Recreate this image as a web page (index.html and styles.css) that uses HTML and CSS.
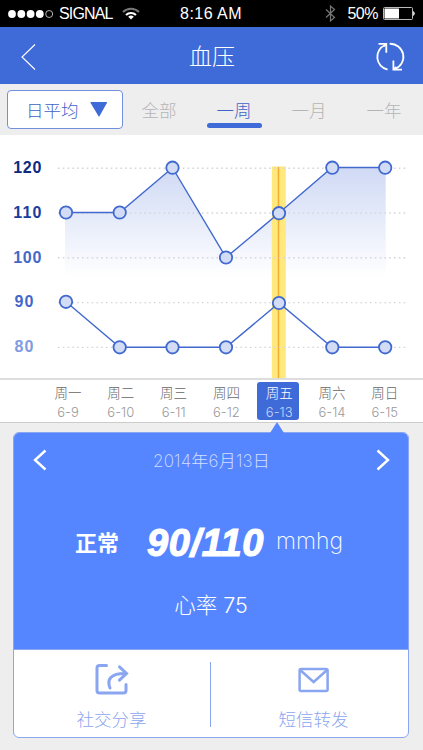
FILE: index.html
```html
<!DOCTYPE html>
<html lang="zh-CN">
<head>
    <meta charset="UTF-8">
    <meta name="viewport" content="width=device-width, initial-scale=1.0">
    <title>血压</title>
    <link rel="stylesheet" href="styles.css">
</head>
<body>
    <div class="status-bar">
        <div class="signal">
            <svg width="46" height="10" viewBox="0 0 46 10">
                <g fill="#fff">
                    <circle cx="4" cy="5" r="3.9"/>
                    <circle cx="13.3" cy="5" r="3.9"/>
                    <circle cx="22.6" cy="5" r="3.9"/>
                    <circle cx="31.8" cy="5" r="3.9"/>
                </g>
                <circle cx="41.2" cy="5" r="3.5" fill="none" stroke="#ddd" stroke-width="0.8"/>
            </svg>
            <span class="carrier">SIGNAL</span>
            <svg width="18" height="13" viewBox="0 0 18 13" fill="none" stroke="#fff" stroke-width="2">
                <path d="M1 5a11.3 11.3 0 0 1 16 0" stroke="#777"/>
                <path d="M4 8a7.1 7.1 0 0 1 10 0"/>
                <path d="M9 12.5L6.2 9.8a4 4 0 0 1 5.6 0z" fill="#fff" stroke="none"/>
            </svg>
        </div>
        <div class="clock">8:16 AM</div>
        <div class="power">
            <svg width="11" height="17" viewBox="0 0 11 17" fill="none" stroke="#777" stroke-width="1.2">
                <path d="M1 4.5l8.5 8-4 3.5V1l4 3.5-8.5 8"/>
            </svg>
            <span class="percent">50%</span>
            <svg width="33" height="13" viewBox="0 0 33 13">
                <rect x="0.5" y="0.5" width="29" height="12" rx="1" fill="none" stroke="#bbb"/>
                <rect x="1.5" y="1.5" width="14.5" height="10" fill="#fff"/>
                <path d="M30.5 4.5q2 2 0 4z" fill="#fff" stroke="#fff" stroke-width="0.6"/>
            </svg>
        </div>
    </div>

    <div class="header">
        <svg class="back" width="15" height="28" viewBox="0 0 15 28" fill="none" stroke="#fff" stroke-width="1.1">
            <path d="M14 1.5L1 14l13 12.5"/>
        </svg>
        <h1>血压</h1>
        <svg class="refresh" width="30" height="30" viewBox="0 0 30 30" fill="none" stroke="#fff" stroke-width="1.8">
            <path d="M12.6 27.6A13 13 0 0 1 10 3"/>
            <path d="M3.5 1.9h7.8v8.8M11.3 2L8.5 4.4"/>
            <path d="M14.6 1.8A13 13 0 0 1 19.8 27"/>
            <path d="M27 27.6h-8.6v-9M18.4 27.6l3-2.6"/>
        </svg>
    </div>

    <div class="tabs">
        <div class="select">日平均
            <svg width="18" height="15" viewBox="0 0 18 15" fill="#3f6bd9">
                <path d="M1 0h15.5q1 0 .4 1L9.6 14q-.6 1-1.2 0L.6 1Q0 0 1 0z"/>
            </svg>
        </div>
        <div class="tab">全部</div>
        <div class="tab active">一周</div>
        <div class="tab">一月</div>
        <div class="tab">一年</div>
    </div>

    <div class="chart">
        <svg width="423" height="243" viewBox="0 0 423 243">
            <defs>
                <linearGradient id="fade" gradientUnits="userSpaceOnUse" x1="0" y1="32" x2="0" y2="142">
                    <stop offset="0" stop-color="#4169d5" stop-opacity="0.25"/>
                    <stop offset="1" stop-color="#4169d5" stop-opacity="0"/>
                </linearGradient>
            </defs>
            <path d="M65 77.5H119.7L172.5 32.7L226 122.5L279 78L332 32.5H385.7V142H65z" fill="url(#fade)"/>
            <rect x="271.8" y="31.5" width="14" height="211.5" fill="#ffe87c"/>
            <path d="M278.5 32v211" stroke="#f2ab35" stroke-width="1.5"/>
            <g class="grid">
                <path d="M58 33.2H408M58 78H408M58 122.8H408M58 167.6H408M58 212.4H408"/>
            </g>
            <g class="lines">
                <path d="M66 77.5H119.7L172.5 32.7L226 122.5L279 78L332 32.5H385"/>
                <path d="M66 166.8L119.7 212.3H226L279 168L332 212.3H385"/>
            </g>
            <g class="dots">
                <circle cx="66" cy="77.5" r="6.2"/>
                <circle cx="119.7" cy="77.5" r="6.2"/>
                <circle cx="172.5" cy="32.7" r="6.2"/>
                <circle cx="226" cy="122.5" r="6.2"/>
                <circle cx="279" cy="78.2" r="6.2"/>
                <circle cx="332.3" cy="32.7" r="6.2"/>
                <circle cx="385.2" cy="32.7" r="6.2"/>
                <circle cx="66" cy="166.8" r="6.2"/>
                <circle cx="119.7" cy="212.3" r="6.2"/>
                <circle cx="172.5" cy="212.3" r="6.2"/>
                <circle cx="226" cy="212.3" r="6.2"/>
                <circle cx="279" cy="168" r="6.2"/>
                <circle cx="332.3" cy="212.3" r="6.2"/>
                <circle cx="385.2" cy="212.3" r="6.2"/>
            </g>
            <g class="labels">
                <text x="13.3" y="38.3" textLength="28" fill="#0c2a80">120</text>
                <text x="13.3" y="83" textLength="28" fill="#1c3c9c">110</text>
                <text x="13.3" y="127.5" textLength="28" fill="#4468c8">100</text>
                <text x="14.5" y="172.3" textLength="19" fill="#4468c8">90</text>
                <text x="14.5" y="216.6" textLength="19" fill="#809be0">80</text>
            </g>
        </svg>
    </div>

    <div class="days">
        <div class="day">周一<span>6-9</span></div>
        <div class="day">周二<span>6-10</span></div>
        <div class="day">周三<span>6-11</span></div>
        <div class="day">周四<span>6-12</span></div>
        <div class="day selected">周五<span>6-13</span></div>
        <div class="day">周六<span>6-14</span></div>
        <div class="day">周日<span>6-15</span></div>
    </div>

    <div class="card">
        <div class="result">
            <div class="date-nav">
                <svg width="14" height="22" viewBox="0 0 14 22" fill="none" stroke="#fff" stroke-width="2.4">
                    <path d="M12.5 1.5L2 11l10.5 9.5"/>
                </svg>
                <span>2014年6月13日</span>
                <svg width="14" height="22" viewBox="0 0 14 22" fill="none" stroke="#fff" stroke-width="2.4">
                    <path d="M1.5 1.5L12 11 1.5 20.5"/>
                </svg>
            </div>
            <div class="reading">
                <span class="level">正常</span>
                <span class="value">90/110</span>
                <span class="unit">mmhg</span>
            </div>
            <div class="pulse">心率 75</div>
        </div>
        <div class="actions">
            <div class="action">
                <svg width="34" height="32" viewBox="0 0 34 32" fill="none" stroke="#8ba6f0" stroke-width="3" stroke-linecap="round">
                    <path d="M11.5 3.5H4.5Q2 3.5 2 6v22.5Q2 31 4.5 31h24q2.5 0 2.5-2.5V22.5"/>
                    <path d="M15 26C11.5 17 16 11.5 30 11.5"/>
                    <path d="M24.5 4.8l7 6.7-7 6.7"/>
                </svg>
                社交分享
            </div>
            <div class="divider"></div>
            <div class="action">
                <svg width="32" height="32" viewBox="0 0 32 32" fill="none" stroke="#8ba6f0" stroke-width="2.5">
                    <rect x="1.6" y="7" width="28" height="22" rx="1.5"/>
                    <path d="M2.4 8.3L15.6 20 28.8 8.3"/>
                </svg>
                短信转发
            </div>
        </div>
    </div>
</body>
</html>
```
FILE: styles.css
```css
* {
    box-sizing: border-box;
}
body {
    font-family: "Liberation Sans", "Noto Sans CJK SC", sans-serif;
    margin: 0;
    background: #eee;
    height: 750px;
    overflow: hidden;
}
svg {
    display: block;
    flex-shrink: 0;
    overflow: visible;
}
.status-bar {
    display: grid;
    grid-template-columns: 1fr auto 1fr;
    align-items: center;
    height: 27px;
    padding: 0 7px 0 8px;
    background: #000;
    color: #fff;
    font-size: 16px;
    line-height: 27px;
}
.signal,
.power {
    display: flex;
    align-items: center;
}
.power {
    justify-content: flex-end;
}
.carrier {
    margin: 0 9px 0 5px;
    letter-spacing: -0.85px;
}
.clock {
    margin-right: 2px;
    letter-spacing: 0.45px;
}
.percent {
    margin: 0 5px 0 11px;
    letter-spacing: -0.5px;
}
.header {
    display: flex;
    align-items: center;
    justify-content: space-between;
    height: 57px;
    padding: 2px 18px 0 21px;
    background: #3f6bd9;
}
h1 {
    margin: -4px 0 0 13px;
    color: #fff;
    font-family: "Noto Sans CJK SC", sans-serif;
    font-size: 23px;
    font-weight: 300;
    line-height: 54px;
}
.tabs {
    display: flex;
    align-items: center;
    height: 51px;
    padding-left: 7px;
    font-family: "Noto Sans CJK SC", sans-serif;
    font-size: 17.5px;
    font-weight: 300;
}
.select {
    display: flex;
    align-items: center;
    gap: 11px;
    width: 116px;
    height: 39px;
    padding-left: 18px;
    margin-right: -1px;
    border: 1px solid #7390dc;
    border-radius: 4px;
    background: #fff;
    color: #3f63c8;
}
.tab {
    width: 55px;
    height: 39px;
    margin: 0 10px;
    color: #b5b5b5;
    line-height: 39px;
    text-align: center;
    text-indent: -1px;
}
.tab.active {
    position: relative;
    color: #3f63c8;
}
.tab.active::after {
    content: "";
    position: absolute;
    left: 0;
    bottom: 1px;
    width: 55px;
    height: 5px;
    border-radius: 3px;
    background: #3f6bd9;
}
.chart {
    height: 243px;
    background: #fff;
}
.grid {
    stroke: #d5d5dc;
    stroke-width: 1.4;
    stroke-dasharray: 1.6 3.2;
}
.lines {
    fill: none;
    stroke: #4169cf;
    stroke-width: 1.4;
}
.dots {
    fill: #d3dcf5;
    stroke: #4169cf;
    stroke-width: 1.8;
}
.labels {
    font-size: 16px;
    font-weight: bold;
}
.days {
    display: grid;
    grid-template-columns: repeat(7, 42px);
    column-gap: 10.8px;
    height: 45px;
    padding: 2px 0 0 46px;
    border-top: 2px solid #ddd;
    border-bottom: 1px solid #ccc;
    background: #fff;
}
.day {
    height: 38px;
    border-radius: 3px;
    color: #666;
    font-family: "Noto Sans CJK SC", sans-serif;
    font-size: 13.5px;
    font-weight: 300;
    line-height: 20px;
    text-align: center;
    text-indent: 2px;
}
.day span {
    display: block;
    color: #999;
    font-family: Inter, sans-serif;
    font-size: 13px;
    font-weight: 300;
    line-height: 21px;
}
.day.selected {
    background: #3f6bd9;
    color: #fff;
}
.day.selected span {
    color: #c9d6fa;
}
.card {
    position: relative;
    width: 396px;
    height: 306px;
    margin: 9px 0 0 13px;
    border: 1px solid #8ba6f0;
    border-radius: 6px;
    background: #fff;
}
.card::before {
    content: "";
    position: absolute;
    top: -11px;
    left: 256px;
    border: 7px solid transparent;
    border-top: 0;
    border-bottom: 11px solid #5686ff;
}
.result {
    height: 217px;
    border-bottom: 1px solid #8ba6f0;
    border-radius: 5px 5px 0 0;
    background: #5686ff;
    color: #fff;
}
.date-nav {
    display: flex;
    align-items: center;
    justify-content: space-between;
    height: 53px;
    padding: 0 18px 0 19px;
    color: #d5e0ff;
    font-family: Inter, "Noto Sans CJK SC", sans-serif;
    font-size: 17px;
    font-weight: 200;
    letter-spacing: 0.2px;
}
.reading {
    display: flex;
    align-items: center;
    height: 112px;
    padding-left: 61px;
}
.level {
    width: 72px;
    margin-top: -3px;
    font-family: "Noto Sans CJK SC", sans-serif;
    font-size: 22px;
    font-weight: bold;
}
.value {
    width: 129px;
    padding-top: 2px;
    font-size: 38px;
    font-style: italic;
    font-weight: bold;
    letter-spacing: 0.6px;
    -webkit-text-stroke: 1.2px #fff;
}
.unit {
    margin-top: -2px;
    font-family: Inter, sans-serif;
    font-size: 23px;
    font-weight: 200;
}
.pulse {
    font-family: Inter, "Noto Sans CJK SC", sans-serif;
    font-size: 21.5px;
    font-weight: 300;
    line-height: 14px;
    text-align: center;
}
.actions {
    display: flex;
    height: 87px;
    padding: 12px 24px 0 27px;
}
.action {
    display: flex;
    flex-direction: column;
    align-items: center;
    gap: 12px;
    width: 141px;
    color: #8ba6f0;
    font-family: "Noto Sans CJK SC", sans-serif;
    font-size: 17.5px;
    font-weight: 300;
    line-height: 26px;
}
.divider {
    width: 1px;
    height: 65px;
    margin: 0 32px 0 28px;
    background: #8ba6f0;
}
```
